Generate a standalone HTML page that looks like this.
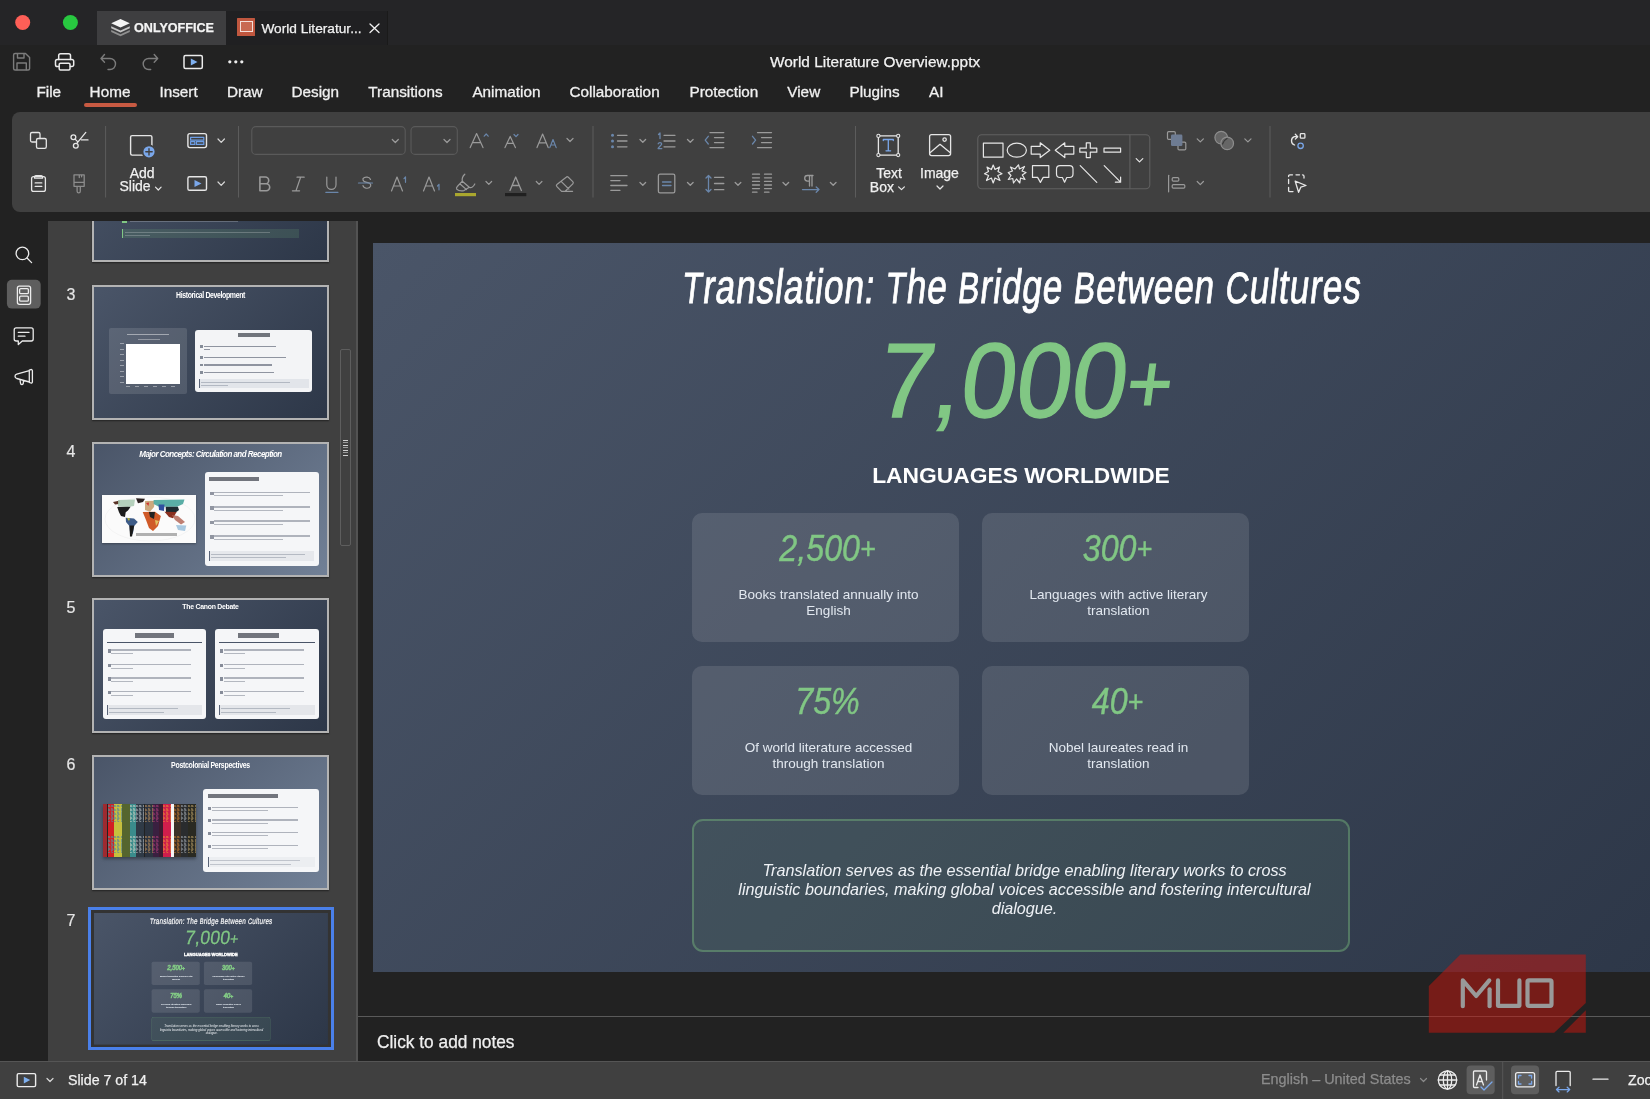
<!DOCTYPE html>
<html><head><meta charset="utf-8">
<style>
*{margin:0;padding:0;box-sizing:border-box}
html,body{width:1650px;height:1099px;overflow:hidden;will-change:transform;background:#222222;font-family:"Liberation Sans",sans-serif;color:#f2f2f2}
.a{position:absolute}
.t{position:absolute;white-space:nowrap;line-height:1}
.ui{-webkit-text-stroke:0.25px currentColor}
#ov{position:absolute;left:0;top:0;width:1650px;height:1099px;pointer-events:none}
.mi{position:absolute;top:83.9px;font-size:15.3px;line-height:1;color:#f0f0f0;white-space:nowrap;-webkit-text-stroke:0.3px #f0f0f0}
.slide{position:absolute;width:1296px;height:729px;overflow:hidden;background:linear-gradient(135deg,#4a5568 0%,#2d3748 100%)}
.cp{font-size:43.6px}
.card{position:absolute;width:267px;height:128.5px;background:rgba(255,255,255,0.11);border-radius:10px}
.card .num{position:absolute;left:1.5px;top:17.6px;width:267px;text-align:center;font-size:36px;line-height:1;font-style:italic;color:#81c784;transform:scaleX(0.895);-webkit-text-stroke:0.4px #81c784}
.th7 .desc{-webkit-text-stroke:0.3px #e2e8f0}
.th7 .t{-webkit-text-stroke:2px currentColor}
.th7 .num{-webkit-text-stroke:4px #81c784}
.card .pl{font-size:30px;position:relative;top:-2px}
.card .desc{position:absolute;left:3px;top:73.5px;width:267px;text-align:center;font-size:13.5px;line-height:16.6px;color:#e2e8f0}
</style></head>
<body>
<!-- header -->
<div class="a" style="left:0;top:0;width:1650px;height:45px;background:#252527"></div>
<div class="a" style="left:97px;top:11px;width:129px;height:34px;background:#3e3e40"></div>
<div class="a" style="left:226px;top:11px;width:162px;height:34px;background:#202022;border-right:1px solid #1a1a1a"></div>
<div class="t" style="left:134px;top:22.2px;font-size:12.6px;font-weight:bold;color:#f4f4f4;-webkit-text-stroke:0.25px #f4f4f4">ONLYOFFICE</div>
<div class="a" style="left:237px;top:17.8px;width:18px;height:18px;background:#c0573f;border-radius:0.5px"></div>
<div class="a" style="left:239.6px;top:21px;width:13.2px;height:11px;border:1.5px solid #f3e0da;background:#c86a52"></div>
<div class="t" style="left:261.4px;top:22.3px;font-size:13.7px;color:#f2f2f2;-webkit-text-stroke:0.25px #f2f2f2">World Literatur...</div>
<div class="t" style="left:770px;top:54.2px;font-size:15.4px;color:#f2f2f2;-webkit-text-stroke:0.25px #f2f2f2">World Literature Overview.pptx</div>
<!-- menu -->
<div class="mi" style="left:36.4px">File</div>
<div class="mi" style="left:89.6px">Home</div>
<div class="mi" style="left:159.4px">Insert</div>
<div class="mi" style="left:226.9px">Draw</div>
<div class="mi" style="left:291.5px">Design</div>
<div class="mi" style="left:368.3px">Transitions</div>
<div class="mi" style="left:472.4px">Animation</div>
<div class="mi" style="left:569.5px">Collaboration</div>
<div class="mi" style="left:689.5px">Protection</div>
<div class="mi" style="left:787.3px">View</div>
<div class="mi" style="left:849.5px">Plugins</div>
<div class="mi" style="left:929px">AI</div>
<div class="a" style="left:83.5px;top:103.2px;width:53.2px;height:3.8px;background:#c85a42;border-radius:2px"></div>
<!-- toolbar -->
<div class="a" style="left:12px;top:112px;width:1660px;height:99.5px;background:#404040;border-radius:8px"></div>
<!-- left rail / panels -->
<div class="a" style="left:48px;top:221px;width:310px;height:840px;background:#404040;border-right:2px solid #535353"></div>
<div class="a" style="left:358px;top:1016px;width:1292px;height:1px;background:#5a5a5a"></div>
<!-- status bar -->
<div class="a" style="left:0;top:1061px;width:1650px;height:38px;background:#404040;border-top:1px solid #555"></div>
<!--THUMBS--><div class="a" style="left:48px;top:221px;width:308px;height:840px;overflow:hidden"><div class="a" style="left:44.0px;top:-93.7px;width:237.0px;height:135.0px;background:#b3b3b3;box-shadow:0 1px 1.5px rgba(0,0,0,0.45)"></div>
<div class="a" style="left:46.0px;top:-91.7px;width:233.0px;height:131.0px;background:linear-gradient(135deg,#4a5568 0%,#2d3748 100%)"></div>
<div class="a" style="left:74.0px;top:-1.2px;width:5.0px;height:3.2px;background:#81c784"></div>
<div class="a" style="left:82.0px;top:-0.7px;width:108.0px;height:1.5px;background:rgba(255,255,255,0.22)"></div>
<div class="a" style="left:74.0px;top:7.8px;width:177.0px;height:9.5px;background:rgba(129,199,132,0.15);border-left:1px solid #81c784"></div>
<div class="a" style="left:77.0px;top:10.7px;width:145.0px;height:1.3px;background:rgba(255,255,255,0.22)"></div>
<div class="a" style="left:77.0px;top:14.2px;width:24.7px;height:1.3px;background:rgba(255,255,255,0.22)"></div>
<div class="a" style="left:44.0px;top:64.0px;width:237.0px;height:135.0px;background:#b3b3b3;box-shadow:0 1px 1.5px rgba(0,0,0,0.45)"></div>
<div class="a" style="left:46.0px;top:66.0px;width:233.0px;height:131.0px;background:linear-gradient(135deg,#4a5568 0%,#2d3748 100%)"></div>
<div class="t" style="left:18.5px;top:66.3px;font-size:16px;color:#e6e6e6;-webkit-text-stroke:0.2px #e6e6e6">3</div>
<div class="t" style="left:46.0px;top:71.0px;width:233.0px;text-align:center;font-size:8.2px;font-weight:bold;color:#fff;letter-spacing:-0.45px;transform:scaleX(0.85)">Historical Development</div>
<div class="a" style="left:61.2px;top:107.0px;width:78.3px;height:65.7px;background:rgba(255,255,255,0.12);border-radius:2px"></div>
<div class="a" style="left:79.0px;top:113.0px;width:42.0px;height:1.3px;background:rgba(255,255,255,0.45)"></div>
<div class="a" style="left:90.0px;top:117.6px;width:22.0px;height:1.2px;background:rgba(255,255,255,0.35)"></div>
<div class="a" style="left:78.0px;top:122.7px;width:53.5px;height:39.9px;background:#ffffff"></div>
<div class="a" style="left:72.0px;top:122.0px;width:4.0px;height:41.0px;background:repeating-linear-gradient(180deg,rgba(255,255,255,0.4) 0 1px,transparent 1px 5.5px)"></div>
<div class="a" style="left:78.0px;top:164.6px;width:53.5px;height:1.2px;background:repeating-linear-gradient(90deg,rgba(255,255,255,0.4) 0 4px,transparent 4px 9px)"></div>
<div class="a" style="left:147.0px;top:108.7px;width:117.3px;height:62.6px;background:#f3f4f6;border-radius:3px"></div>
<div class="a" style="left:190.4px;top:112.3px;width:31.2px;height:4.0px;background:rgba(26,32,44,0.6)"></div>
<div class="a" style="left:151.5px;top:124.2px;width:3.5px;height:2.8px;background:rgba(60,70,90,0.6)"></div>
<div class="a" style="left:156.2px;top:124.9px;width:72.0px;height:1.4px;background:rgba(60,70,90,0.55)"></div>
<div class="a" style="left:156.2px;top:128.1px;width:6.0px;height:1.4px;background:rgba(60,70,90,0.55)"></div>
<div class="a" style="left:151.5px;top:135.0px;width:3.5px;height:2.8px;background:rgba(60,70,90,0.6)"></div>
<div class="a" style="left:156.2px;top:135.7px;width:82.0px;height:1.4px;background:rgba(60,70,90,0.55)"></div>
<div class="a" style="left:151.5px;top:142.7px;width:3.5px;height:2.8px;background:rgba(60,70,90,0.6)"></div>
<div class="a" style="left:156.2px;top:143.4px;width:68.0px;height:1.4px;background:rgba(60,70,90,0.55)"></div>
<div class="a" style="left:151.5px;top:150.0px;width:3.5px;height:2.8px;background:rgba(60,70,90,0.6)"></div>
<div class="a" style="left:156.2px;top:150.7px;width:70.0px;height:1.4px;background:rgba(60,70,90,0.55)"></div>
<div class="a" style="left:150.8px;top:158.3px;width:110.1px;height:8.7px;background:#e2e5ea;border-left:1px solid #5a6478"></div>
<div class="a" style="left:153.0px;top:160.5px;width:89.0px;height:1.0px;background:rgba(90,100,120,0.35)"></div>
<div class="a" style="left:153.0px;top:163.5px;width:26.7px;height:1.0px;background:rgba(90,100,120,0.35)"></div>
<div class="a" style="left:44.0px;top:220.5px;width:237.0px;height:135.0px;background:#b3b3b3;box-shadow:0 1px 1.5px rgba(0,0,0,0.45)"></div>
<div class="a" style="left:46.0px;top:222.5px;width:233.0px;height:131.0px;background:linear-gradient(135deg,#4a5568 0%,#718096 100%)"></div>
<div class="t" style="left:18.5px;top:222.8px;font-size:16px;color:#e6e6e6;-webkit-text-stroke:0.2px #e6e6e6">4</div>
<div class="t" style="left:46.0px;top:228.5px;width:233.0px;text-align:center;font-size:8.4px;font-weight:bold;font-style:italic;color:#fff;letter-spacing:-0.55px;transform:scaleX(0.955)">Major Concepts: Circulation and Reception</div>
<div class="a" style="left:54.4px;top:274.2px;width:93.8px;height:47.7px;background:#fbfbfb;box-shadow:0 1px 2px rgba(0,0,0,0.3)"></div>
<svg class="a" style="left:54.7px;top:274.3px" width="94" height="48" viewBox="0 0 94 48"><ellipse cx="47" cy="24" rx="45" ry="22" fill="none" stroke="#eee" stroke-width="0.6"/><path d="M10 7 L17 5.5 L16 9 L12 9.5 Z" fill="#5a3326"/><path d="M15 5 L32 4.5 L31 11 L24 12 L15 11.5 Z" fill="#a8c8b0" opacity="0.85"/><path d="M33 3.3 L42 3.8 L40 7 L35 8.2 Z" fill="#2a2020"/><path d="M14.2 12 L27.6 11.8 L25 15.5 L22.7 17.3 L22 22 L18 21 L16 17.3 Z" fill="#1c1c1c"/><path d="M22.7 22.7 L31 23.5 L34.8 27 L31.2 31 L30 38 L27.5 41.5 L26.4 31 L23 27 Z" fill="#3e5c88"/><path d="M26.4 30.6 L31.2 30.6 L29 41.5 L27 41.5 Z" fill="#1a1a1a"/><path d="M24 23 L27 23.5 L26 26 Z" fill="#c8c030"/><path d="M42 6 L51.8 5.8 L51 12 L47 16.7 L42 15 Z" fill="#c8a070" opacity="0.9"/><path d="M43 8 L46 7.5 L45.5 11 Z" fill="#d03030"/><path d="M39.7 17 L52 16.7 L57.9 21 L55 31 L50 36 L46 33 L43 25 Z" fill="#d05a28"/><path d="M46 17 L52 17 L51 24 L47 22 Z" fill="#222"/><path d="M52 25 L56 26 L53 31 Z" fill="#e0c060"/><path d="M50.6 5 L81.5 4.6 L80 9 L74 11.8 L56 11.8 L50.6 9 Z" fill="#5aaea6"/><path d="M55.5 9.4 L61.5 9.5 L61 16 L56 15 Z" fill="#3050a0"/><path d="M62.7 11.8 L74.9 11.8 L76 15 L72 17.9 L63 17 Z" fill="#1e2a30"/><path d="M61.5 16.7 L73.6 17 L70 23.3 L66 22 Z" fill="#8a3020"/><path d="M68.8 20 L75 21 L82 27 L78 29.4 L72 25 Z" fill="#b06050" opacity="0.8"/><path d="M73 30 L83.3 30.5 L82 36 L75 35 Z" fill="#a8c8e0"/></svg>
<div class="a" style="left:88.3px;top:311.6px;width:40.6px;height:3.2px;background:rgba(40,40,40,0.35)"></div>
<div class="a" style="left:156.9px;top:251.2px;width:114.2px;height:93.5px;background:#f5f6f8;border-radius:3px"></div>
<div class="a" style="left:161.3px;top:256.0px;width:50.2px;height:4.4px;background:rgba(26,32,44,0.6)"></div>
<div class="a" style="left:161.5px;top:270.8px;width:4.0px;height:3.5px;background:rgba(60,70,90,0.55)"></div>
<div class="a" style="left:166.0px;top:270.5px;width:95.6px;height:1.6px;background:rgba(60,70,90,0.38)"></div>
<div class="a" style="left:166.0px;top:274.3px;width:69.0px;height:1.2px;background:rgba(60,70,90,0.35)"></div>
<div class="a" style="left:161.5px;top:285.3px;width:4.0px;height:3.5px;background:rgba(60,70,90,0.55)"></div>
<div class="a" style="left:166.0px;top:285.0px;width:95.6px;height:1.6px;background:rgba(60,70,90,0.38)"></div>
<div class="a" style="left:166.0px;top:288.8px;width:69.0px;height:1.2px;background:rgba(60,70,90,0.35)"></div>
<div class="a" style="left:161.5px;top:299.5px;width:4.0px;height:3.5px;background:rgba(60,70,90,0.55)"></div>
<div class="a" style="left:166.0px;top:299.2px;width:95.6px;height:1.6px;background:rgba(60,70,90,0.38)"></div>
<div class="a" style="left:166.0px;top:303.0px;width:69.0px;height:1.2px;background:rgba(60,70,90,0.35)"></div>
<div class="a" style="left:161.5px;top:314.4px;width:4.0px;height:3.5px;background:rgba(60,70,90,0.55)"></div>
<div class="a" style="left:166.0px;top:314.1px;width:95.6px;height:1.6px;background:rgba(60,70,90,0.38)"></div>
<div class="a" style="left:166.0px;top:317.9px;width:69.0px;height:1.2px;background:rgba(60,70,90,0.35)"></div>
<div class="a" style="left:161.0px;top:329.5px;width:105.0px;height:10.5px;background:#e6e8ec;border-left:1px solid #5a6478"></div>
<div class="a" style="left:163.0px;top:332.5px;width:94.0px;height:1.0px;background:rgba(90,100,120,0.35)"></div>
<div class="a" style="left:163.0px;top:336.0px;width:75.2px;height:1.0px;background:rgba(90,100,120,0.35)"></div>
<div class="a" style="left:44.0px;top:377.0px;width:237.0px;height:135.0px;background:#b3b3b3;box-shadow:0 1px 1.5px rgba(0,0,0,0.45)"></div>
<div class="a" style="left:46.0px;top:379.0px;width:233.0px;height:131.0px;background:linear-gradient(135deg,#4a5568 0%,#2d3748 100%)"></div>
<div class="t" style="left:18.5px;top:379.3px;font-size:16px;color:#e6e6e6;-webkit-text-stroke:0.2px #e6e6e6">5</div>
<div class="t" style="left:46.0px;top:381.6px;width:233.0px;text-align:center;font-size:8.0px;font-weight:bold;color:#fff;letter-spacing:-0.3px;transform:scaleX(0.86)">The Canon Debate</div>
<div class="a" style="left:54.8px;top:407.6px;width:103.2px;height:90.8px;background:#f5f6f8;border-radius:3px"></div>
<div class="a" style="left:87.0px;top:412.3px;width:39.4px;height:5.1px;background:rgba(26,32,44,0.6)"></div>
<div class="a" style="left:58.8px;top:421.0px;width:95.2px;height:0.9px;background:#4a5568"></div>
<div class="a" style="left:59.8px;top:428.0px;width:3.0px;height:3.5px;background:rgba(60,70,90,0.6)"></div>
<div class="a" style="left:63.3px;top:428.2px;width:80.0px;height:1.6px;background:rgba(60,70,90,0.38)"></div>
<div class="a" style="left:63.3px;top:432.0px;width:21.5px;height:1.2px;background:rgba(60,70,90,0.35)"></div>
<div class="a" style="left:59.8px;top:442.5px;width:3.0px;height:3.5px;background:rgba(60,70,90,0.6)"></div>
<div class="a" style="left:63.3px;top:442.7px;width:80.0px;height:1.6px;background:rgba(60,70,90,0.38)"></div>
<div class="a" style="left:63.3px;top:446.5px;width:21.5px;height:1.2px;background:rgba(60,70,90,0.35)"></div>
<div class="a" style="left:59.8px;top:456.0px;width:3.0px;height:3.5px;background:rgba(60,70,90,0.6)"></div>
<div class="a" style="left:63.3px;top:456.2px;width:80.0px;height:1.6px;background:rgba(60,70,90,0.38)"></div>
<div class="a" style="left:63.3px;top:460.0px;width:21.5px;height:1.2px;background:rgba(60,70,90,0.35)"></div>
<div class="a" style="left:59.8px;top:469.7px;width:3.0px;height:3.5px;background:rgba(60,70,90,0.6)"></div>
<div class="a" style="left:63.3px;top:469.9px;width:80.0px;height:1.6px;background:rgba(60,70,90,0.38)"></div>
<div class="a" style="left:63.3px;top:473.7px;width:21.5px;height:1.2px;background:rgba(60,70,90,0.35)"></div>
<div class="a" style="left:58.8px;top:484.3px;width:95.2px;height:9.4px;background:#e4e6ea;border-left:1px solid #5a6478"></div>
<div class="a" style="left:60.8px;top:487.0px;width:69.0px;height:1.0px;background:rgba(90,100,120,0.35)"></div>
<div class="a" style="left:60.8px;top:490.5px;width:55.2px;height:1.0px;background:rgba(90,100,120,0.35)"></div>
<div class="a" style="left:167.0px;top:407.6px;width:104.0px;height:90.8px;background:#f5f6f8;border-radius:3px"></div>
<div class="a" style="left:190.0px;top:412.3px;width:41.0px;height:5.1px;background:rgba(26,32,44,0.6)"></div>
<div class="a" style="left:171.0px;top:421.0px;width:96.0px;height:0.9px;background:#4a5568"></div>
<div class="a" style="left:172.0px;top:428.0px;width:3.0px;height:3.5px;background:rgba(60,70,90,0.6)"></div>
<div class="a" style="left:175.5px;top:428.2px;width:80.0px;height:1.6px;background:rgba(60,70,90,0.38)"></div>
<div class="a" style="left:175.5px;top:432.0px;width:21.5px;height:1.2px;background:rgba(60,70,90,0.35)"></div>
<div class="a" style="left:172.0px;top:442.5px;width:3.0px;height:3.5px;background:rgba(60,70,90,0.6)"></div>
<div class="a" style="left:175.5px;top:442.7px;width:80.0px;height:1.6px;background:rgba(60,70,90,0.38)"></div>
<div class="a" style="left:175.5px;top:446.5px;width:21.5px;height:1.2px;background:rgba(60,70,90,0.35)"></div>
<div class="a" style="left:172.0px;top:456.0px;width:3.0px;height:3.5px;background:rgba(60,70,90,0.6)"></div>
<div class="a" style="left:175.5px;top:456.2px;width:80.0px;height:1.6px;background:rgba(60,70,90,0.38)"></div>
<div class="a" style="left:175.5px;top:460.0px;width:21.5px;height:1.2px;background:rgba(60,70,90,0.35)"></div>
<div class="a" style="left:172.0px;top:469.7px;width:3.0px;height:3.5px;background:rgba(60,70,90,0.6)"></div>
<div class="a" style="left:175.5px;top:469.9px;width:80.0px;height:1.6px;background:rgba(60,70,90,0.38)"></div>
<div class="a" style="left:175.5px;top:473.7px;width:21.5px;height:1.2px;background:rgba(60,70,90,0.35)"></div>
<div class="a" style="left:171.0px;top:484.3px;width:96.0px;height:9.4px;background:#e4e6ea;border-left:1px solid #5a6478"></div>
<div class="a" style="left:173.0px;top:487.0px;width:69.0px;height:1.0px;background:rgba(90,100,120,0.35)"></div>
<div class="a" style="left:173.0px;top:490.5px;width:55.2px;height:1.0px;background:rgba(90,100,120,0.35)"></div>
<div class="a" style="left:44.0px;top:533.5px;width:237.0px;height:135.0px;background:#b3b3b3;box-shadow:0 1px 1.5px rgba(0,0,0,0.45)"></div>
<div class="a" style="left:46.0px;top:535.5px;width:233.0px;height:131.0px;background:linear-gradient(135deg,#4a5568 0%,#718096 100%)"></div>
<div class="t" style="left:18.5px;top:535.8px;font-size:16px;color:#e6e6e6;-webkit-text-stroke:0.2px #e6e6e6">6</div>
<div class="t" style="left:46.0px;top:540.6px;width:233.0px;text-align:center;font-size:8.2px;font-weight:bold;color:#fff;letter-spacing:-0.35px;transform:scaleX(0.85)">Postcolonial Perspectives</div>
<div class="a" style="left:54.7px;top:583.0px;width:93.3px;height:53.3px;background:#222"></div>
<div class="a" style="left:54.7px;top:583.0px;width:4.7px;height:53.3px;background:#9e2a30"></div>
<div class="a" style="left:59.5px;top:583.0px;width:6.3px;height:53.3px;background:#d21f24"></div>
<div class="a" style="left:59.5px;top:584.0px;width:6.3px;height:16.5px;background:radial-gradient(circle at 30% 30%,#30b0c0 0 1px,transparent 1.3px) 0 0/3.5px 4px,radial-gradient(circle at 70% 60%,#30b0c0 0 0.9px,transparent 1.2px) 1px 2px/4px 3.5px;opacity:0.5"></div>
<div class="a" style="left:59.5px;top:614.5px;width:6.3px;height:17.5px;background:radial-gradient(circle at 30% 30%,#30b0c0 0 1px,transparent 1.3px) 0 0/3.5px 4px,radial-gradient(circle at 70% 60%,#30b0c0 0 0.9px,transparent 1.2px) 1px 2px/4px 3.5px;opacity:0.5"></div>
<div class="a" style="left:65.8px;top:583.0px;width:8.1px;height:53.3px;background:#c6c03e"></div>
<div class="a" style="left:65.8px;top:584.0px;width:8.1px;height:16.5px;background:radial-gradient(circle at 30% 30%,#2f70c0 0 1px,transparent 1.3px) 0 0/3.5px 4px,radial-gradient(circle at 70% 60%,#2f70c0 0 0.9px,transparent 1.2px) 1px 2px/4px 3.5px;opacity:0.5"></div>
<div class="a" style="left:65.8px;top:614.5px;width:8.1px;height:17.5px;background:radial-gradient(circle at 30% 30%,#2f70c0 0 1px,transparent 1.3px) 0 0/3.5px 4px,radial-gradient(circle at 70% 60%,#2f70c0 0 0.9px,transparent 1.2px) 1px 2px/4px 3.5px;opacity:0.5"></div>
<div class="a" style="left:73.8px;top:583.0px;width:7.9px;height:53.3px;background:#55652e"></div>
<div class="a" style="left:81.7px;top:583.0px;width:6.0px;height:53.3px;background:#3a8c8c"></div>
<div class="a" style="left:81.7px;top:584.0px;width:6.0px;height:16.5px;background:radial-gradient(circle at 30% 30%,#e8e0d0 0 1px,transparent 1.3px) 0 0/3.5px 4px,radial-gradient(circle at 70% 60%,#e8e0d0 0 0.9px,transparent 1.2px) 1px 2px/4px 3.5px;opacity:0.5"></div>
<div class="a" style="left:81.7px;top:614.5px;width:6.0px;height:17.5px;background:radial-gradient(circle at 30% 30%,#e8e0d0 0 1px,transparent 1.3px) 0 0/3.5px 4px,radial-gradient(circle at 70% 60%,#e8e0d0 0 0.9px,transparent 1.2px) 1px 2px/4px 3.5px;opacity:0.5"></div>
<div class="a" style="left:87.7px;top:583.0px;width:8.8px;height:53.3px;background:#2f3a46"></div>
<div class="a" style="left:87.7px;top:584.0px;width:8.8px;height:16.5px;background:radial-gradient(circle at 30% 30%,#d0d4d8 0 1px,transparent 1.3px) 0 0/3.5px 4px,radial-gradient(circle at 70% 60%,#d0d4d8 0 0.9px,transparent 1.2px) 1px 2px/4px 3.5px;opacity:0.5"></div>
<div class="a" style="left:87.7px;top:614.5px;width:8.8px;height:17.5px;background:radial-gradient(circle at 30% 30%,#d0d4d8 0 1px,transparent 1.3px) 0 0/3.5px 4px,radial-gradient(circle at 70% 60%,#d0d4d8 0 0.9px,transparent 1.2px) 1px 2px/4px 3.5px;opacity:0.5"></div>
<div class="a" style="left:96.5px;top:583.0px;width:8.8px;height:53.3px;background:#2c3440"></div>
<div class="a" style="left:96.5px;top:584.0px;width:8.8px;height:16.5px;background:radial-gradient(circle at 30% 30%,#d8a060 0 1px,transparent 1.3px) 0 0/3.5px 4px,radial-gradient(circle at 70% 60%,#d8a060 0 0.9px,transparent 1.2px) 1px 2px/4px 3.5px;opacity:0.5"></div>
<div class="a" style="left:96.5px;top:614.5px;width:8.8px;height:17.5px;background:radial-gradient(circle at 30% 30%,#d8a060 0 1px,transparent 1.3px) 0 0/3.5px 4px,radial-gradient(circle at 70% 60%,#d8a060 0 0.9px,transparent 1.2px) 1px 2px/4px 3.5px;opacity:0.5"></div>
<div class="a" style="left:105.3px;top:583.0px;width:6.0px;height:53.3px;background:#3a2040"></div>
<div class="a" style="left:105.3px;top:584.0px;width:6.0px;height:16.5px;background:radial-gradient(circle at 30% 30%,#c04080 0 1px,transparent 1.3px) 0 0/3.5px 4px,radial-gradient(circle at 70% 60%,#c04080 0 0.9px,transparent 1.2px) 1px 2px/4px 3.5px;opacity:0.5"></div>
<div class="a" style="left:105.3px;top:614.5px;width:6.0px;height:17.5px;background:radial-gradient(circle at 30% 30%,#c04080 0 1px,transparent 1.3px) 0 0/3.5px 4px,radial-gradient(circle at 70% 60%,#c04080 0 0.9px,transparent 1.2px) 1px 2px/4px 3.5px;opacity:0.5"></div>
<div class="a" style="left:111.3px;top:583.0px;width:3.8px;height:53.3px;background:#3e1a30"></div>
<div class="a" style="left:115.1px;top:583.0px;width:7.6px;height:53.3px;background:#d01e4c"></div>
<div class="a" style="left:115.1px;top:584.0px;width:7.6px;height:16.5px;background:radial-gradient(circle at 30% 30%,#f0a030 0 1px,transparent 1.3px) 0 0/3.5px 4px,radial-gradient(circle at 70% 60%,#f0a030 0 0.9px,transparent 1.2px) 1px 2px/4px 3.5px;opacity:0.5"></div>
<div class="a" style="left:115.1px;top:614.5px;width:7.6px;height:17.5px;background:radial-gradient(circle at 30% 30%,#f0a030 0 1px,transparent 1.3px) 0 0/3.5px 4px,radial-gradient(circle at 70% 60%,#f0a030 0 0.9px,transparent 1.2px) 1px 2px/4px 3.5px;opacity:0.5"></div>
<div class="a" style="left:122.7px;top:583.0px;width:3.2px;height:53.3px;background:#f4f4f4"></div>
<div class="a" style="left:125.8px;top:583.0px;width:7.6px;height:53.3px;background:#3a3028"></div>
<div class="a" style="left:125.8px;top:584.0px;width:7.6px;height:16.5px;background:radial-gradient(circle at 30% 30%,#e08a30 0 1px,transparent 1.3px) 0 0/3.5px 4px,radial-gradient(circle at 70% 60%,#e08a30 0 0.9px,transparent 1.2px) 1px 2px/4px 3.5px;opacity:0.5"></div>
<div class="a" style="left:125.8px;top:614.5px;width:7.6px;height:17.5px;background:radial-gradient(circle at 30% 30%,#e08a30 0 1px,transparent 1.3px) 0 0/3.5px 4px,radial-gradient(circle at 70% 60%,#e08a30 0 0.9px,transparent 1.2px) 1px 2px/4px 3.5px;opacity:0.5"></div>
<div class="a" style="left:133.4px;top:583.0px;width:6.9px;height:53.3px;background:#2a2c2e"></div>
<div class="a" style="left:133.4px;top:584.0px;width:6.9px;height:16.5px;background:radial-gradient(circle at 30% 30%,#b8c0c8 0 1px,transparent 1.3px) 0 0/3.5px 4px,radial-gradient(circle at 70% 60%,#b8c0c8 0 0.9px,transparent 1.2px) 1px 2px/4px 3.5px;opacity:0.5"></div>
<div class="a" style="left:133.4px;top:614.5px;width:6.9px;height:17.5px;background:radial-gradient(circle at 30% 30%,#b8c0c8 0 1px,transparent 1.3px) 0 0/3.5px 4px,radial-gradient(circle at 70% 60%,#b8c0c8 0 0.9px,transparent 1.2px) 1px 2px/4px 3.5px;opacity:0.5"></div>
<div class="a" style="left:140.3px;top:583.0px;width:7.7px;height:53.3px;background:#2a2a22"></div>
<div class="a" style="left:140.3px;top:584.0px;width:7.7px;height:16.5px;background:radial-gradient(circle at 30% 30%,#d0b070 0 1px,transparent 1.3px) 0 0/3.5px 4px,radial-gradient(circle at 70% 60%,#d0b070 0 0.9px,transparent 1.2px) 1px 2px/4px 3.5px;opacity:0.5"></div>
<div class="a" style="left:140.3px;top:614.5px;width:7.7px;height:17.5px;background:radial-gradient(circle at 30% 30%,#d0b070 0 1px,transparent 1.3px) 0 0/3.5px 4px,radial-gradient(circle at 70% 60%,#d0b070 0 0.9px,transparent 1.2px) 1px 2px/4px 3.5px;opacity:0.5"></div>
<div class="a" style="left:54.8px;top:583.0px;width:93.4px;height:53.3px;box-shadow:0 2px 3px rgba(0,0,0,0.35)"></div>
<div class="a" style="left:155.2px;top:568.0px;width:115.9px;height:82.9px;background:#f5f6f8;border-radius:3px"></div>
<div class="a" style="left:159.5px;top:572.6px;width:70.5px;height:4.4px;background:rgba(26,32,44,0.6)"></div>
<div class="a" style="left:159.8px;top:585.7px;width:3.2px;height:3.0px;background:rgba(60,70,90,0.6)"></div>
<div class="a" style="left:164.0px;top:585.7px;width:86.0px;height:1.6px;background:rgba(60,70,90,0.38)"></div>
<div class="a" style="left:164.0px;top:589.0px;width:56.0px;height:1.2px;background:rgba(60,70,90,0.35)"></div>
<div class="a" style="left:159.8px;top:598.2px;width:3.2px;height:3.0px;background:rgba(60,70,90,0.6)"></div>
<div class="a" style="left:164.0px;top:598.2px;width:86.0px;height:1.6px;background:rgba(60,70,90,0.38)"></div>
<div class="a" style="left:164.0px;top:601.5px;width:56.0px;height:1.2px;background:rgba(60,70,90,0.35)"></div>
<div class="a" style="left:159.8px;top:610.8px;width:3.2px;height:3.0px;background:rgba(60,70,90,0.6)"></div>
<div class="a" style="left:164.0px;top:610.8px;width:86.0px;height:1.6px;background:rgba(60,70,90,0.38)"></div>
<div class="a" style="left:164.0px;top:614.1px;width:56.0px;height:1.2px;background:rgba(60,70,90,0.35)"></div>
<div class="a" style="left:159.8px;top:623.8px;width:3.2px;height:3.0px;background:rgba(60,70,90,0.6)"></div>
<div class="a" style="left:164.0px;top:623.8px;width:86.0px;height:1.6px;background:rgba(60,70,90,0.38)"></div>
<div class="a" style="left:164.0px;top:627.1px;width:56.0px;height:1.2px;background:rgba(60,70,90,0.35)"></div>
<div class="a" style="left:159.5px;top:636.3px;width:107.0px;height:9.7px;background:#eceef1;border-left:1px solid #5a6478"></div>
<div class="a" style="left:162.0px;top:639.0px;width:90.0px;height:1.0px;background:rgba(90,100,120,0.3)"></div>
<div class="a" style="left:162.0px;top:642.5px;width:81.0px;height:1.0px;background:rgba(90,100,120,0.3)"></div>
<div class="t" style="left:18.5px;top:691.8px;font-size:16px;color:#e6e6e6;-webkit-text-stroke:0.2px #e6e6e6">7</div>
<div class="a" style="left:39.8px;top:685.9px;width:245.8px;height:142.7px;background:#333;border:3px solid #4a80ea"></div>
<div class="slide th7" style="left:45.5px;top:691.5px;transform:scale(0.1805);transform-origin:0 0"><div class="t" style="left:-373px;width:2042px;text-align:center;top:20.2px;font-size:48px;color:#ffffff;letter-spacing:1.3px;transform:scaleX(0.731) skewX(-9deg);transform-origin:1021px 38px;-webkit-text-stroke:0.9px #ffffff"><span class="cp">T</span>ranslation: <span class="cp">T</span>he <span class="cp">B</span>ridge <span class="cp">B</span>etween <span class="cp">C</span>ultures</div>
<div class="t" style="left:-371.5px;width:2042px;text-align:center;top:83.5px;font-size:106px;color:#81c784;transform:scaleX(0.936) skewX(-8deg);transform-origin:1021px 80px;-webkit-text-stroke:1.4px #81c784">7,000<span style="font-size:83px;position:relative;top:-5.5px">+</span></div>
<div class="t" style="left:-373px;width:2042px;text-align:center;top:220.9px;font-size:22.8px;font-weight:bold;color:#ffffff">LANGUAGES WORLDWIDE</div>
<div class="card" style="left:319px;top:270px"><div class="num">2,500<span class="pl">+</span></div><div class="desc">Books translated annually into<br>English</div></div>
<div class="card" style="left:609px;top:270px"><div class="num">300<span class="pl">+</span></div><div class="desc">Languages with active literary<br>translation</div></div>
<div class="card" style="left:319px;top:423px"><div class="num">75%</div><div class="desc">Of world literature accessed<br>through translation</div></div>
<div class="card" style="left:609px;top:423px"><div class="num">40<span class="pl">+</span></div><div class="desc">Nobel laureates read in<br>translation</div></div>
<div class="a" style="left:318.5px;top:575.5px;width:658px;height:133px;border:2.1px solid rgba(129,199,132,0.38);background:rgba(129,199,132,0.085);border-radius:11px"></div>
<div class="a" style="left:322px;top:617.5px;width:659px;text-align:center;font-size:16.2px;line-height:19.3px;font-style:italic;color:#eef1f5">Translation serves as the essential bridge enabling literary works to cross<br>linguistic boundaries, making global voices accessible and fostering intercultural<br>dialogue.</div>
</div>
<div class="a" style="left:291.5px;top:127.5px;width:11.0px;height:197.0px;border:1px solid #5e5e5e;border-radius:2px"></div>
<div class="a" style="left:295.0px;top:218.5px;width:4.5px;height:1.2px;background:#d0d0d0"></div>
<div class="a" style="left:295.0px;top:221.0px;width:4.5px;height:1.2px;background:#9a9a9a"></div>
<div class="a" style="left:295.0px;top:223.5px;width:4.5px;height:1.2px;background:#d0d0d0"></div>
<div class="a" style="left:295.0px;top:226.0px;width:4.5px;height:1.2px;background:#9a9a9a"></div>
<div class="a" style="left:295.0px;top:228.5px;width:4.5px;height:1.2px;background:#d0d0d0"></div>
<div class="a" style="left:295.0px;top:231.0px;width:4.5px;height:1.2px;background:#9a9a9a"></div>
<div class="a" style="left:295.0px;top:233.5px;width:4.5px;height:1.2px;background:#d0d0d0"></div></div>
<!--/THUMBS-->

<div class="slide" style="left:373px;top:243px"><div class="t" style="left:-373px;width:2042px;text-align:center;top:20.2px;font-size:48px;color:#ffffff;letter-spacing:1.3px;transform:scaleX(0.731) skewX(-9deg);transform-origin:1021px 38px;-webkit-text-stroke:0.9px #ffffff"><span class="cp">T</span>ranslation: <span class="cp">T</span>he <span class="cp">B</span>ridge <span class="cp">B</span>etween <span class="cp">C</span>ultures</div>
<div class="t" style="left:-371.5px;width:2042px;text-align:center;top:83.5px;font-size:106px;color:#81c784;transform:scaleX(0.936) skewX(-8deg);transform-origin:1021px 80px;-webkit-text-stroke:1.4px #81c784">7,000<span style="font-size:83px;position:relative;top:-5.5px">+</span></div>
<div class="t" style="left:-373px;width:2042px;text-align:center;top:220.9px;font-size:22.8px;font-weight:bold;color:#ffffff">LANGUAGES WORLDWIDE</div>
<div class="card" style="left:319px;top:270px"><div class="num">2,500<span class="pl">+</span></div><div class="desc">Books translated annually into<br>English</div></div>
<div class="card" style="left:609px;top:270px"><div class="num">300<span class="pl">+</span></div><div class="desc">Languages with active literary<br>translation</div></div>
<div class="card" style="left:319px;top:423px"><div class="num">75%</div><div class="desc">Of world literature accessed<br>through translation</div></div>
<div class="card" style="left:609px;top:423px"><div class="num">40<span class="pl">+</span></div><div class="desc">Nobel laureates read in<br>translation</div></div>
<div class="a" style="left:318.5px;top:575.5px;width:658px;height:133px;border:2.1px solid rgba(129,199,132,0.38);background:rgba(129,199,132,0.085);border-radius:11px"></div>
<div class="a" style="left:322px;top:617.5px;width:659px;text-align:center;font-size:16.2px;line-height:19.3px;font-style:italic;color:#eef1f5">Translation serves as the essential bridge enabling literary works to cross<br>linguistic boundaries, making global voices accessible and fostering intercultural<br>dialogue.</div>
</div>
<!--SLIDE-->
<div class="t" style="left:142.1px;transform:translateX(-50%);top:165.6px;font-size:14px;color:#f0f0f0;-webkit-text-stroke:0.25px #f0f0f0">Add</div>
<div class="t" style="left:119.5px;top:179.4px;font-size:14px;color:#f0f0f0;-webkit-text-stroke:0.25px #f0f0f0">Slide</div>
<div class="t" style="left:876.3px;top:165.7px;font-size:14px;color:#f0f0f0;-webkit-text-stroke:0.25px #f0f0f0">Text</div>
<div class="t" style="left:869.8px;top:179.9px;font-size:14px;color:#f0f0f0;-webkit-text-stroke:0.25px #f0f0f0">Box</div>
<div class="t" style="left:920px;top:165.7px;font-size:14px;color:#f0f0f0;-webkit-text-stroke:0.25px #f0f0f0">Image</div>
<div class="t" style="left:376.6px;top:1033.2px;font-size:18px;transform:scaleX(0.961);transform-origin:0 0;color:#f0f0f0;-webkit-text-stroke:0.25px #f0f0f0">Click to add notes</div>
<div class="t" style="left:68px;top:1072.6px;font-size:14.2px;color:#f0f0f0;-webkit-text-stroke:0.25px #f0f0f0">Slide 7 of 14</div>
<div class="t" style="left:1261px;top:1071.9px;font-size:14.4px;color:#8c8c8c;-webkit-text-stroke:0.25px #8c8c8c">English – United States</div>
<div class="t" style="left:1628px;top:1072.6px;font-size:14.2px;color:#f0f0f0;-webkit-text-stroke:0.25px #f0f0f0">Zoom</div>
<!--/STATUS-->
<!--ICONS--><svg id="ov" width="1650" height="1099" viewBox="0 0 1650 1099" fill="none" stroke-linecap="round" stroke-linejoin="round">
<!-- traffic lights -->
<circle cx="22.7" cy="22.5" r="7.5" fill="#fe5f57"/>
<circle cx="70.4" cy="22.5" r="7.5" fill="#28c840"/>
<!-- onlyoffice logo -->
<path d="M120.5 19 L129.8 23.3 L120.5 27.6 L111.2 23.3 Z" fill="#f4f4f4"/>
<path d="M111.2 26.3 L120.5 30.6 L129.8 26.3 L129.8 28.3 L120.5 32.6 L111.2 28.3 Z" fill="#c4c4c4"/>
<path d="M111.2 30 L120.5 34.3 L129.8 30 L129.8 32 L120.5 36.3 L111.2 32 Z" fill="#8f8f8f"/>
<!-- close x -->
<path d="M370 24 L379 32.5 M379 24 L370 32.5" stroke="#f0f0f0" stroke-width="1.3"/>
<!-- quick access -->
<g stroke="#7c7c7c" stroke-width="1.4">
<path d="M13.6 55 a1.5 1.5 0 0 1 1.5 -1.5 H25.5 L29.6 57.6 V68.5 a1.5 1.5 0 0 1 -1.5 1.5 H15.1 a1.5 1.5 0 0 1 -1.5 -1.5 Z"/>
<path d="M17.5 53.7 V58 H24 V53.7"/>
<path d="M17 69.8 V63 H26.3 V69.8"/>
<path d="M101 58.5 L104.5 54.5 M101 58.5 L104.5 62.2 M101.3 58.5 H110 a5.5 5.5 0 0 1 0 11 H108"/>
<path d="M157.7 58.5 L154.2 54.5 M157.7 58.5 L154.2 62.2 M157.4 58.5 H148.7 a5.5 5.5 0 0 0 0 11 H150.7"/>
</g>
<g stroke="#ececec" stroke-width="1.5">
<path d="M58.7 59.5 V55.5 a1.8 1.8 0 0 1 1.8 -1.8 H68.7 a1.8 1.8 0 0 1 1.8 1.8 V59.5"/>
<path d="M58.7 66.5 H57.3 a1.8 1.8 0 0 1 -1.8 -1.8 V61.3 a1.8 1.8 0 0 1 1.8 -1.8 H71.9 a1.8 1.8 0 0 1 1.8 1.8 V64.7 a1.8 1.8 0 0 1 -1.8 1.8 H70.5"/>
<rect x="59.2" y="63.3" width="10.8" height="6.6" rx="1.2"/>
<rect x="184" y="55.5" width="18.3" height="13" rx="1.5"/>
</g>
<path d="M190.8 58.6 L197.5 62 L190.8 65.4 Z" fill="#7fb0f0"/>
<circle cx="229.8" cy="61.8" r="1.6" fill="#ececec"/><circle cx="235.8" cy="61.8" r="1.6" fill="#ececec"/><circle cx="241.8" cy="61.8" r="1.6" fill="#ececec"/>
<!-- toolbar separators -->
<g fill="#5c5c5c">
<rect x="105.1" y="126" width="1" height="71.5"/><rect x="238" y="126" width="1" height="71.5"/><rect x="592.5" y="126" width="1" height="71.5"/><rect x="855" y="126" width="1" height="71.5"/><rect x="1269.5" y="126" width="1" height="71.5"/>
</g>
<!-- clipboard group -->
<g stroke="#e6e6e6" stroke-width="1.3">
<path d="M40 138.5 V134 a1.5 1.5 0 0 0 -1.5 -1.5 H32 a1.5 1.5 0 0 0 -1.5 1.5 V140.5 a1.5 1.5 0 0 0 1.5 1.5 H36.5"/>
<rect x="36.5" y="138.5" width="9.8" height="9.8" rx="1.6"/>
<circle cx="73.4" cy="137.3" r="2.4"/><circle cx="75.8" cy="145.7" r="2.4"/>
<path d="M85.8 132.4 L77.2 142.9 M75.1 139.1 L77.6 141.6 M81.4 139.9 H88"/>
<rect x="31.6" y="176.6" width="13.8" height="14.8" rx="2"/>
<path d="M34.6 178.2 V176.8 a1.2 1.2 0 0 1 1.2 -1.2 H41.3 a1.2 1.2 0 0 1 1.2 1.2 V178.2 Z"/>
<path d="M35.2 182.9 H41.8 M35.2 186.4 H41.8"/>
</g>
<g stroke="#8c8c8c" stroke-width="1.3">
<path d="M74 174.9 H84.2 V186.3 H74 Z M74 182.3 H84.2 M77.1 186.3 V191.2 a1.6 1.6 0 0 0 3.2 0 V186.3 M79.3 175 V177.6 M81.6 175 V176.8"/>
</g>
<!-- add slide -->
<rect x="130.6" y="135.6" width="21.3" height="19.5" rx="1.5" stroke="#e6e6e6" stroke-width="1.4"/>
<circle cx="149" cy="151.8" r="6.4" fill="#7aa7ea" stroke="#404040" stroke-width="1.6"/>
<path d="M149 148.6 V155 M145.8 151.8 H152.2" stroke="#404040" stroke-width="1.4"/>
<path d="M155.5 187.2 L158.3 190 L161.1 187.2" stroke="#e6e6e6" stroke-width="1.2"/>
<!-- layout / slideshow -->
<g stroke="#e6e6e6" stroke-width="1.4">
<rect x="187.9" y="133.6" width="18.6" height="14" rx="2"/>
<rect x="187.9" y="176.8" width="18.6" height="13.5" rx="1.6"/>
</g>
<g stroke="#6d9ee6" stroke-width="1.2">
<rect x="190.6" y="137.4" width="13.2" height="2.8"/>
<rect x="190.6" y="141.6" width="4.2" height="2.8"/>
<rect x="196.4" y="141.6" width="7.4" height="2.8"/>
</g>
<path d="M194.5 180 L201.5 183.5 L194.5 187 Z" fill="#7aa7ea"/>
<g stroke="#d8d8d8" stroke-width="1.2">
<path d="M218 139 L221.2 142.3 L224.4 139"/>
<path d="M218 182 L221.2 185.3 L224.4 182"/>
</g>
<!-- font group (dim) -->
<g stroke="#5a5a5a" stroke-width="1.1">
<rect x="251.8" y="126.6" width="153.4" height="27.8" rx="4"/>
<rect x="411" y="126.6" width="46.3" height="27.8" rx="4"/>
</g>
<g stroke="#9a9a9a" stroke-width="1.2">
<path d="M392.3 139.5 L395.3 142.5 L398.3 139.5 M444 139.5 L447 142.5 L450 139.5 M567 138.5 L570 141.5 L573 138.5"/>
<path d="M470.2 147.6 L476.6 133.6 L483 147.6 M472.5 142.6 H480.7"/>
<path d="M505 147.6 L510.2 136.4 L515.4 147.6 M506.9 143.3 H513.5"/>
<path d="M537 147.6 L542.6 134 L548.2 147.6 M539 142.8 H546.2"/>
<path d="M259.9 177 H265.3 a3.4 3.4 0 0 1 0 6.8 H259.9 Z M259.9 183.8 H266.2 a3.5 3.5 0 0 1 0 7 H259.9 Z" stroke-width="1.6"/>
<path d="M297 177.2 H304.2 M292.4 190.8 H299.6 M300.6 177.2 L296 190.8"/>
<path d="M326.8 177 V184.8 a4.6 4.6 0 0 0 9.2 0 V177"/>
<path d="M370.5 179.5 a4 3 0 0 0 -7.5 -0.8 c-0.6 2.2 1.6 3.2 3.8 3.6 c2.4 0.5 4.6 1.5 3.8 4 a4 3.2 0 0 1 -7.6 -0.6"/>
<path d="M391.5 191 L397 177 L402.5 191 M393.5 186 H400.5"/>
<path d="M423.5 191 L429 177 L434.5 191 M425.5 186 H432.5"/>
<path d="M510 190.5 L515.7 177 L521.4 190.5 M512 185.5 H519.4" stroke-width="1.3"/>
<path d="M462.3 181.2 L469.3 187.2 L464 190.6 C461 191.2 458.5 190.8 456.8 189.2 C456.2 188.3 456.5 187.3 457.3 186.5 Z M459.8 183.8 L466.5 189.6 M462.3 181.2 C461.8 178.5 462.5 176.2 464.8 174.2 M469.3 187.2 C471 188.2 473 187.5 474.8 184"/>
<path d="M566.2 177.2 a1.5 1.5 0 0 1 2.1 0 L572.8 181.7 a1.5 1.5 0 0 1 0 2.1 L565.2 191.3 H561.6 L556.9 186.6 a1.5 1.5 0 0 1 0 -2.1 Z M561.6 181.8 L568.9 189.1 M565.2 191.3 H572.6"/>
<path d="M486 181.5 L488.8 184.3 L491.6 181.5 M536.3 181.5 L539.1 184.3 L541.9 181.5"/>
</g>
<g stroke="#6a86aa" stroke-width="1.2">
<path d="M484.2 136.2 L486.2 134 L488.2 136.2"/>
<path d="M514 134.5 L516 136.7 L518 134.5"/>
<path d="M549.8 147.6 L553 139.5 L556.2 147.6 M551 145 H555"/>
<path d="M325.8 192.3 H338"/>
<path d="M358.5 183 H372.5"/>
<path d="M404 178.7 L405.5 177 V182.3"/>
<path d="M437.5 186 L439 184.3 V189.8"/>
</g>
<rect x="455" y="193" width="21" height="3.2" fill="#aaa72e"/>
<rect x="505" y="193" width="21.3" height="3.2" fill="#202020"/>
<!-- paragraph group -->
<g fill="#6a86aa">
<circle cx="612.5" cy="135.3" r="1.5"/><circle cx="612.5" cy="141" r="1.5"/><circle cx="612.5" cy="146.8" r="1.5"/>
</g>
<g stroke="#9a9a9a" stroke-width="1.3">
<path d="M617.5 135.3 H627 M617.5 141 H627 M617.5 146.8 H627"/>
<path d="M664 135.3 H675 M664 141 H675 M664 146.8 H675"/>
<path d="M710 132.6 H723.8 M714.5 137.6 H723.8 M714.5 142.6 H723.8 M710 147.6 H723.8"/>
<path d="M757.5 132.6 H771.5 M761.5 137.6 H771.5 M761.5 142.6 H771.5 M757.5 147.6 H771.5"/>
<path d="M610.8 175.7 H627 M610.8 180.6 H620 M610.8 185.5 H627 M610.8 190.3 H620"/>
<rect x="658.4" y="174.2" width="16.4" height="18.6" rx="1.6"/>
<path d="M714.5 177.3 H723.8 M714.5 183.5 H723.8 M714.5 189.7 H723.8"/>
<path d="M752.5 174.2 H759.5 M752.5 177.8 H759.5 M752.5 181.4 H759.5 M752.5 185 H759.5 M752.5 188.6 H759.5 M752.5 192.2 H757 M764.5 174.2 H771.5 M764.5 177.8 H771.5 M764.5 181.4 H771.5 M764.5 185 H771.5 M764.5 188.6 H771.5 M764.5 192.2 H769"/>
<path d="M807 175.5 H813 M809.5 175.5 V186 M812 175.5 V186 M807.5 175.5 a2.8 2.8 0 0 0 0 5.6 H809.5"/>
<path d="M640 139.5 L642.8 142.3 L645.6 139.5 M687.5 139.5 L690.3 142.3 L693.1 139.5 M640 182.5 L642.8 185.3 L645.6 182.5 M687.5 182.5 L690.3 185.3 L693.1 182.5 M735.2 182.5 L738 185.3 L740.8 182.5 M783 182.5 L785.8 185.3 L788.6 182.5 M830.4 182.5 L833.2 185.3 L836 182.5"/>
</g>
<g stroke="#6a86aa" stroke-width="1.3">
<path d="M658.5 134.5 L660 133 V138.5"/>
<path d="M658.2 143.8 a1.8 1.8 0 0 1 3.5 0.3 c0 1.2 -3.6 3.2 -3.6 4.5 H661.8"/>
<path d="M708.3 136.3 L705.2 140.2 L708.3 144"/>
<path d="M752.5 136.3 L755.6 140.2 L752.5 144"/>
<path d="M662.5 182 H671 M662.5 185.5 H671"/>
<path d="M708.5 175.5 V192 M706 178 L708.5 175.5 L711 178 M706 189.5 L708.5 192 L711 189.5"/>
<path d="M802.5 189.6 H819 M816.2 187 L819 189.6 L816.2 192.2"/>
</g>
<!-- insert group -->
<g stroke="#e6e6e6" stroke-width="1.3">
<rect x="878.4" y="135.9" width="19.8" height="19.2"/>
<rect x="929.6" y="134.6" width="21" height="21" rx="2"/>
<path d="M930 152.8 L940 144.3 L950.3 152.8"/>
<circle cx="944.6" cy="139.6" r="1.7"/>
<path d="M898.6 186.8 L901.5 189.7 L904.4 186.8 M937 186 L940 189 L943 186" stroke-width="1.2"/>
</g>
<g fill="#404040" stroke="#e6e6e6" stroke-width="1.1">
<circle cx="878.4" cy="135.9" r="1.6"/><circle cx="898.2" cy="135.9" r="1.6"/><circle cx="878.4" cy="155.1" r="1.6"/><circle cx="898.2" cy="155.1" r="1.6"/>
</g>
<path d="M883.3 140.6 V139.5 H893.3 V140.6 M888.3 139.5 V150.8 M886 150.8 H890.6" stroke="#7aa7ea" stroke-width="1.3"/>
<rect x="977.8" y="134.8" width="172" height="54" rx="4" stroke="#606060" stroke-width="1.1"/>
<path d="M1129.9 135 V188.8" stroke="#606060" stroke-width="1.1"/>
<g stroke="#e6e6e6" stroke-width="1.2">
<rect x="983.4" y="143.2" width="19.6" height="14"/>
<ellipse cx="1016.8" cy="150.2" rx="9.6" ry="7"/>
<path d="M1031.2 146.3 H1040.2 V142.8 L1049.8 150.2 L1040.2 157.6 V154.1 H1031.2 Z"/>
<path d="M1073.8 146.3 H1064.8 V142.8 L1055.2 150.2 L1064.8 157.6 V154.1 H1073.8 Z"/>
<path d="M1086.3 142.8 H1090.3 V148.2 H1096.8 V152.2 H1090.3 V157.6 H1086.3 V152.2 H1079.8 V148.2 H1086.3 Z"/>
<rect x="1104" y="148.2" width="16.6" height="4"/>
<path d="M993.2 165 L995 169.5 L999.5 167 L998 171.5 L1002 173.7 L997.8 175.5 L1000 180.5 L995 178 L993.2 183 L991.4 178 L986.5 180.5 L988.6 175.5 L984.5 173.7 L988.5 171.5 L987 167 L991.4 169.5 Z"/>
<path d="M1018.5 164.8 L1019.5 169 L1024.5 166.5 L1022 171 L1026 172.5 L1022.3 175 L1025 179.5 L1020.5 178 L1019.8 183 L1016.5 179 L1013.5 183 L1012.8 178.5 L1008.3 179.5 L1011 175.5 L1008.3 172.5 L1012.5 171 L1010.5 167 L1015 169 Z"/>
<path d="M1032.5 165.6 H1048.8 V177.4 H1043.2 L1040.4 182.4 L1037.6 177.4 H1032.5 Z"/>
<path d="M1060 165.6 H1069.5 a3.5 3.5 0 0 1 3.5 3.5 V174 a3.5 3.5 0 0 1 -3.5 3.5 H1066.8 L1064.6 182.2 L1062.4 177.5 H1060 a3.5 3.5 0 0 1 -3.5 -3.5 V169.1 a3.5 3.5 0 0 1 3.5 -3.5 Z"/>
<path d="M1080.2 165.6 L1096.8 182.4"/>
<path d="M1104.2 165.6 L1120.6 182.2 M1120.6 177 V182.2 H1115.4"/>
<path d="M1136.2 158.6 L1139.5 161.9 L1142.8 158.6"/>
</g>
<!-- arrange group -->
<g stroke="#9a9a9a" stroke-width="1.2">
<rect x="1167.5" y="131.6" width="7.8" height="7.8" rx="1.2"/>
<rect x="1178" y="142.1" width="7.8" height="7.8" rx="1.2"/>
</g>
<rect x="1171" y="134.6" width="11.4" height="11.4" rx="1.3" fill="#6e7c93"/>
<circle cx="1221.2" cy="137.6" r="6.3" fill="#666666" stroke="#8e8e8e" stroke-width="1.2"/>
<circle cx="1227.2" cy="143.4" r="6.3" fill="#666666" stroke="#8e8e8e" stroke-width="1.2"/>
<path d="M1222.5 144 C1223.5 141 1225 139.5 1227 138.5" stroke="#3a3a3a" stroke-width="1.3"/>
<g stroke="#9a9a9a" stroke-width="1.2">
<path d="M1168.6 175.3 V191.8"/>
<rect x="1172.2" y="177.6" width="6.6" height="3.6" rx="1.1"/>
<rect x="1172.2" y="184.6" width="12.6" height="3.6" rx="1.1"/>
<path d="M1197.2 138.8 L1200.3 141.9 L1203.4 138.8 M1244.8 138.8 L1247.9 141.9 L1251 138.8 M1197.2 181.5 L1200.3 184.6 L1203.4 181.5"/>
</g>
<g stroke="#e6e6e6" stroke-width="1.3">
<path d="M1294.6 145 a4.4 4.4 0 0 1 -0.3 -8.3 H1297.6 M1295.3 134.3 L1297.7 136.7 L1295.3 139.1"/>
<rect x="1300.3" y="133.6" width="4.6" height="4.6" rx="0.8"/>
<path d="M1293 191.6 H1289.8 a1.2 1.2 0 0 1 -1.2 -1.2 V187.5 M1288.6 183.5 V179.5 M1288.6 176.5 V176 a1.2 1.2 0 0 1 1.2 -1.2 H1292.5 M1296 174.8 H1299.5 M1302.5 174.8 a1.5 1.5 0 0 1 1.5 1.5 V178"/>
<path d="M1295.2 181.2 L1306 185.5 L1300.8 187.2 L1298.6 192.3 Z"/>
</g>
<circle cx="1300.6" cy="145.8" r="2.7" stroke="#7aa7ea" stroke-width="1.3"/>
<!-- left rail -->
<rect x="6.9" y="279.7" width="33.8" height="28.9" rx="5" fill="#5e5e5e"/>
<g stroke="#ececec" stroke-width="1.3">
<circle cx="22.4" cy="253.4" r="6.3"/>
<path d="M27 258 L31.6 262.6"/>
<rect x="17.4" y="286.1" width="13.2" height="18.2" rx="2"/>
<rect x="19.6" y="288.6" width="8.8" height="5" rx="1.2"/>
<rect x="19.6" y="296.2" width="8.8" height="5" rx="1.2"/>
<path d="M16.2 327.9 H31.2 a2 2 0 0 1 2 2 V339 a2 2 0 0 1 -2 2 H22.3 L18.3 344.6 V341 H16.2 a2 2 0 0 1 -2 -2 V329.9 a2 2 0 0 1 2 -2 Z"/>
<path d="M18.3 332.4 H29 M18.3 336.2 H25"/>
<path d="M29.3 370.6 L16.8 374.1 C14.4 374.9 14.4 377.7 16.8 378.5 L29.3 382 Z M29.3 370.2 L30.8 369.6 a1.2 1.2 0 0 1 1.6 1.1 V381.9 a1.2 1.2 0 0 1 -1.6 1.1 L29.3 382.4 M19.9 379.4 L20.5 383.2 a1.4 1.4 0 0 0 2.8 -0.2 L23.5 380.4"/>
</g>
<!-- status bar -->
<rect x="17.2" y="1073.6" width="18.4" height="13" rx="1.4" stroke="#ececec" stroke-width="1.4"/>
<path d="M23.8 1076.8 L30.2 1080.1 L23.8 1083.4 Z" fill="#7fb0f0"/>
<path d="M47 1078.5 L50 1081.5 L53 1078.5" stroke="#d8d8d8" stroke-width="1.2"/>
<path d="M1420.5 1078.5 L1423.5 1081.5 L1426.5 1078.5" stroke="#8a8a8a" stroke-width="1.2"/>
<g stroke="#ececec" stroke-width="1.3">
<circle cx="1447.5" cy="1080" r="9.2"/>
<ellipse cx="1447.5" cy="1080" rx="4.2" ry="9.2"/>
<path d="M1438.3 1080 H1456.7 M1439.8 1075 H1455.2 M1439.8 1085 H1455.2 M1447.5 1070.8 V1089.2"/>
</g>
<rect x="1466.6" y="1065.4" width="28.1" height="28.9" rx="4" fill="#5e5e5e"/>
<rect x="1511" y="1065.4" width="28.1" height="28.9" rx="4" fill="#5e5e5e"/>
<rect x="1502.2" y="1061" width="1" height="38" fill="#575757"/>
<g stroke="#ececec" stroke-width="1.3">
<path d="M1486.5 1080 V1072 a1 1 0 0 0 -1 -1 H1474.5 a1 1 0 0 0 -1 1 V1086.5 a1 1 0 0 0 1 1 H1478"/>
<path d="M1476.5 1085 L1480 1075 L1483.5 1085 M1477.8 1081.5 H1482.2"/>
<rect x="1515.6" y="1072.6" width="19" height="14.2" rx="2"/>
<path d="M1556 1085.5 V1072.5 a1.2 1.2 0 0 1 1.2 -1.2 H1569 a1.2 1.2 0 0 1 1.2 1.2 V1085.5"/>
<path d="M1593 1079.2 H1608"/>
</g>
<g stroke="#7aa7ea" stroke-width="1.3">
<path d="M1481 1087 L1484 1090 L1492 1082"/>
<path d="M1518.5 1078 V1075.5 H1521 M1529 1075.5 H1531.6 V1078 M1531.6 1081.5 V1084 H1529 M1521 1084 H1518.5 V1081.5"/>
<path d="M1556.5 1089.6 H1569.7 M1559 1087.3 L1556.5 1089.6 L1559 1091.9 M1567.2 1087.3 L1569.7 1089.6 L1567.2 1091.9"/>
</g>
<!-- watermark -->
<path d="M1460.3 954.5 H1585.8 V1003 L1554.2 1032.7 H1428.8 V986 Z" fill="rgba(202,22,14,0.5)"/>
<path d="M1585.8 1010.3 V1032.7 H1563.3 Z" fill="rgba(202,22,14,0.5)"/>
<g stroke="#999999" stroke-width="4.2" stroke-linecap="round" stroke-linejoin="round">
<path d="M1462.8 1006.2 V980.4 L1476.2 996 L1489.3 980.4"/>
<path d="M1489.6 989.3 V1006.2"/>
<path d="M1498 980.4 V1005.8 H1519.4 V980.4"/>
<rect x="1527.5" y="980.4" width="24" height="25.4" rx="1.5"/>
</g>
</svg>
<!--/ICONS-->
</body></html>
